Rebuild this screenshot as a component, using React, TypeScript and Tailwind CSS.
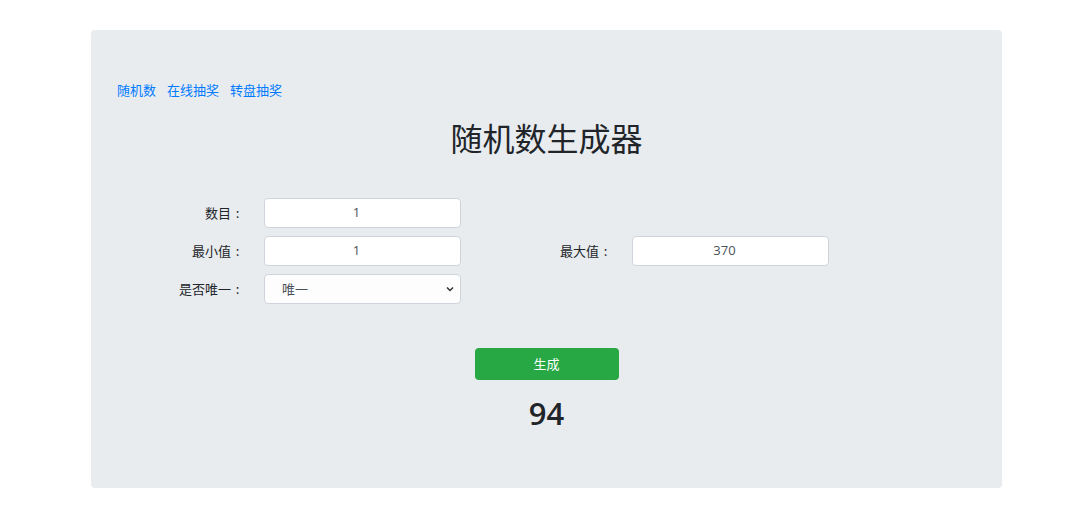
import React from "react";

const cjk = { fontFamily: '"Noto Sans CJK SC", "Noto Sans", sans-serif' };

function Label({ text }: { text: string }) {
  return (
    <div className="w-[128px] text-right text-[13px] text-[#212529] pr-[1px]">
      {text}
      <span className="inline-block w-[13px] text-center">:</span>
    </div>
  );
}

function Field({ label, value }: { label: string; value: string }) {
  return (
    <div className="flex items-center">
      <Label text={label} />
      <div
        className="ml-[19px] w-[197px] h-[30px] bg-white border border-[#ced4da] rounded-[4px] flex items-center justify-center text-[13px] text-[#495057] pr-[12px]"
        style={{ fontFamily: '"Open Sans", "Noto Sans CJK SC", sans-serif' }}
      >
        {value}
      </div>
    </div>
  );
}

export default function App() {
  return (
    <div className="w-[1080px] h-[506px] bg-white pt-[30px]" style={cjk}>
      <div className="ml-[91px] w-[911px] h-[458px] bg-[#e9ecef] rounded-[4px] pt-[50px] px-[26px]">
        <div className="flex gap-[11px] text-[13px] leading-[20px] text-[#007bff]">
          <span>随机数</span>
          <span>在线抽奖</span>
          <span>转盘抽奖</span>
        </div>
        <h1 className="mt-[18px] text-center text-[32px] leading-[38px] text-[#212529] font-normal">
          随机数生成器
        </h1>
        <div className="mt-[42px] flex flex-col gap-[8px]">
          <Field label="数目" value="1" />
          <div className="flex items-center">
            <Field label="最小值" value="1" />
            <div className="ml-[24px]">
              <Field label="最大值" value="370" />
            </div>
          </div>
          <div className="flex items-center">
            <Label text="是否唯一" />
            <div className="ml-[19px] w-[197px] h-[30px] bg-[#fdfdfd] border border-[#ced4da] rounded-[4px] flex items-center justify-between pl-[17px] pr-[5px] text-[13px] text-[#495057]">
              <span>唯一</span>
              <svg width="10" height="10" viewBox="0 0 10 10">
                <path d="M2 3.5 L5 6.5 L8 3.5" fill="none" stroke="#333" strokeWidth="1.5" />
              </svg>
            </div>
          </div>
        </div>
        <div className="mt-[44px] flex justify-center">
          <button className="w-[144px] h-[32px] bg-[#28a745] rounded-[4px] text-white text-[13px]">
            生成
          </button>
        </div>
        <div
          className="mt-[15px] text-center text-[31px] leading-[36px] font-semibold text-[#212529]"
          style={{ fontFamily: '"Open Sans", sans-serif' }}
        >
          94
        </div>
      </div>
    </div>
  );
}
